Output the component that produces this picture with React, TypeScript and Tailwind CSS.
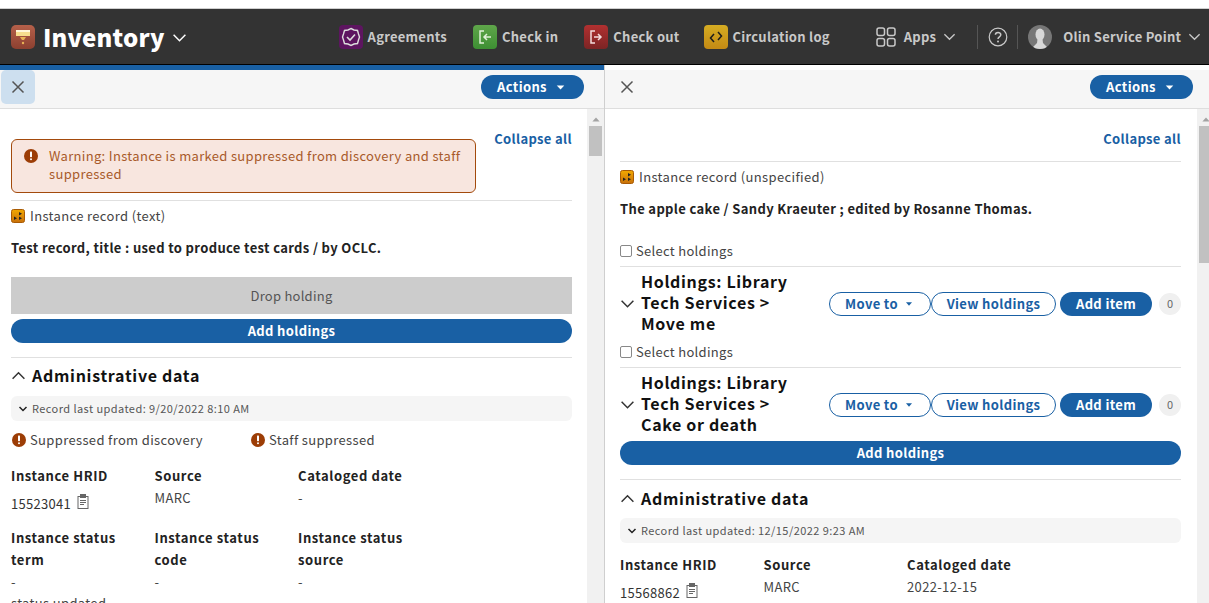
import { ReactNode } from 'react'

const FONT = 'font-["Noto_Sans_CJK_SC","Noto_Sans",sans-serif]'

const Chevron = ({ up, className }: { up?: boolean; className?: string }) => (
    <svg viewBox="0 0 14 14" className={className} fill="none" stroke="currentColor" strokeWidth="1.4">
        <path d={up ? 'M1.5 10 L7 4.5 L12.5 10' : 'M1.5 4.5 L7 10 L12.5 4.5'} />
    </svg>
)

const Caret = ({ className }: { className?: string }) => (
    <svg viewBox="0 0 10 6" className={className} fill="currentColor">
        <path d="M0.5 0.5 H9.5 L5 5.5 Z" />
    </svg>
)

const CloseX = () => (
    <svg viewBox="0 0 14 14" className="w-[14px] h-[14px] text-[#555]" fill="none" stroke="currentColor" strokeWidth="1.5">
        <path d="M1.5 1.5 L12.5 12.5 M12.5 1.5 L1.5 12.5" />
    </svg>
)

const AppTile = ({ bg, children }: { bg: string; children: ReactNode }) => (
    <div className={`w-6 h-6 rounded-[4px] flex items-center justify-center shrink-0 ${bg}`}>
        <svg viewBox="0 0 24 24" className="w-6 h-6" fill="none">
            {children}
        </svg>
    </div>
)

const NavItem = ({ label, tile, className }: { label: string; tile: ReactNode; className: string }) => (
    <div className={`flex items-center gap-[5px] shrink-0 ${className}`}>
        {tile}
        <span className="text-[13px] font-bold text-[#c9c9c9] tracking-[0.25px] whitespace-nowrap">{label}</span>
    </div>
)

const ActionsButton = () => (
    <button
        type="button"
        className="w-[103px] h-6 rounded-full bg-[#1960a4] text-white text-[13px] font-bold tracking-[0.35px] flex items-center justify-center gap-[9px] pr-[3px]"
    >
        Actions
        <Caret className="w-[9px] h-[5px]" />
    </button>
)

const RecordIcon = () => (
    <svg viewBox="0 0 14 14" className="w-[14px] h-[14px] shrink-0">
        <defs>
            <linearGradient id="rec" x1="0" y1="0" x2="0" y2="1">
                <stop offset="0" stopColor="#f2a900" />
                <stop offset="1" stopColor="#c8700a" />
            </linearGradient>
        </defs>
        <rect x="0.5" y="0.5" width="13" height="13" rx="2" fill="url(#rec)" stroke="#a85a05" />
        <path d="M8 3 L11 4.7 L8 6.4 Z M3 7.6 L6 9.3 L3 11 Z M8 7.6 L11 9.3 L8 11 Z" fill="#222" />
    </svg>
)

const WarnIcon = () => (
    <svg viewBox="0 0 14 14" className="w-[14px] h-[14px] shrink-0">
        <circle cx="7" cy="7" r="7" fill="#9c3d06" />
        <rect x="6" y="2.6" width="2" height="5.6" rx="0.6" fill="#fff" />
        <rect x="6" y="9.3" width="2" height="2" rx="1" fill="#fff" />
    </svg>
)

const ClipIcon = () => (
    <svg viewBox="0 0 12 15" className="w-3 h-[15px] text-[#666] shrink-0" fill="none" stroke="currentColor" strokeWidth="1">
        <rect x="1" y="2.5" width="10" height="12" />
        <rect x="3.5" y="0.5" width="5" height="3" fill="currentColor" />
        <path d="M3 6.5 H9 M3 8.5 H9 M3 10.5 H7" />
    </svg>
)

const Scrollbar = ({ thumb }: { thumb: string }) => (
    <div className="w-[17px] shrink-0 bg-[#f1f1f1] flex flex-col items-center">
        <svg viewBox="0 0 10 6" className="w-2 h-[5px] mt-[8px] text-[#a3a3a3]" fill="currentColor">
            <path d="M5 0.5 L9.5 5.5 H0.5 Z" />
        </svg>
        <div className={`w-[13px] bg-[#c1c1c1] mt-[4px] ${thumb}`} />
    </div>
)

const Field = ({ label, value, hrid }: { label: ReactNode; value: string; hrid?: boolean }) => (
    <div className="w-[143.5px] shrink-0 pr-[20px]">
        <div className="text-[13px] font-bold text-[#222] tracking-[0.6px] leading-[22px]">{label}</div>
        {hrid ? (
            <div className="flex items-center gap-[6px] mt-[6px] text-[13px] text-[#333] tracking-[0.3px] leading-[22px]">
                {value}
                <span className="-mt-[5px]">
                    <ClipIcon />
                </span>
            </div>
        ) : (
            <div className="text-[13px] text-[#444] tracking-[0.35px] leading-[22px]">{value}</div>
        )}
    </div>
)

const AdminHeading = () => (
    <div className="flex items-center gap-[6px] h-[22px]">
        <Chevron up className="w-[15px] h-[15px] text-[#333]" />
        <span className="text-[16px] font-bold text-[#111] tracking-[0.7px]">Administrative data</span>
    </div>
)

const LastUpdated = ({ text }: { text: string }) => (
    <div className="h-[25px] bg-[#f5f5f5] rounded-[6px] flex items-center pl-[7px] gap-[4px]">
        <svg viewBox="0 0 10 10" className="w-[10px] h-[10px] text-[#222]" fill="none" stroke="currentColor" strokeWidth="1.5">
            <path d="M1.5 3 L5 6.5 L8.5 3" />
        </svg>
        <span className="text-[11px] text-[#555] tracking-[0.43px]">{text}</span>
    </div>
)

const Holding = ({ name }: { name: string }) => (
    <div>
        <div className="flex items-center gap-[4px] h-[18px] text-[13px] text-[#444] tracking-[0.3px]">
            <span className="w-3 h-3 border border-[#888] rounded-[2px] bg-white shrink-0" />
            Select holdings
        </div>
        <div className="border-t border-[#e0e0e0] mt-[6px] flex items-center h-[72px] pt-[2px]">
            <Chevron className="w-[15px] h-[15px] text-[#333] shrink-0 mr-[6px]" />
            <div className="w-[188px] pr-[24px] -mt-[2px] shrink-0 text-[16px] font-bold text-[#111] tracking-[0.65px] leading-[21px]">
                Holdings: Library Tech Services &gt; {name}
            </div>
            <div className="w-[102px] h-6 rounded-full border border-[#1960a4] text-[#1960a4] text-[13px] font-bold tracking-[0.35px] flex items-center justify-center gap-[6px] pr-[1px]">
                Move to
                <Caret className="w-[10px] h-[4px]" />
            </div>
            <div className="w-[125px] h-6 rounded-full border border-[#1960a4] text-[#1960a4] text-[13px] font-bold tracking-[0.35px] flex items-center justify-center">
                View holdings
            </div>
            <div className="w-[92px] h-6 ml-[4px] rounded-full bg-[#1960a4] text-white text-[13px] font-bold tracking-[0.35px] flex items-center justify-center">
                Add item
            </div>
            <div className="w-[22px] h-[22px] ml-[7px] rounded-full bg-[#f0f0f0] text-[#666] text-[11px] flex items-center justify-center">
                0
            </div>
        </div>
    </div>
)

const CollapseAll = () => (
    <div className="text-[13px] font-bold text-[#1960a4] tracking-[0.35px] text-right leading-[20px]">Collapse all</div>
)

const AddHoldings = () => (
    <div className="h-6 rounded-full bg-[#1960a4] text-white text-[13px] font-bold tracking-[0.35px] flex items-center justify-center">
        Add holdings
    </div>
)

const RecordType = ({ text }: { text: string }) => (
    <div className="flex items-center gap-[5px] mt-[6px] h-[18px] text-[13px] text-[#444] tracking-[0.36px]">
        <RecordIcon />
        {text}
    </div>
)

const RecordTitle = ({ text }: { text: string }) => (
    <div className="mt-[14px] h-[18px] leading-[18px] text-[13px] font-bold text-[#222] tracking-[0.35px]">{text}</div>
)

const LeftPane = () => (
    <div className="w-[604px] shrink-0 border-t-[5px] border-[#1960a4] h-full flex flex-col">
        <div className="h-[39px] bg-[#f6f6f6] border-b border-[#dedede] flex items-start justify-between pr-[20px] pl-[1px] shrink-0">
            <div className="w-[34px] h-[34px] rounded-[5px] bg-[#cddfef] flex items-center justify-center">
                <CloseX />
            </div>
            <div className="mt-[5px]">
                <ActionsButton />
            </div>
        </div>
        <div className="flex flex-1 min-h-0 overflow-hidden">
            <div className="w-[561px] ml-[11px] mr-[15px] shrink-0">
                <div className="mt-[20px]">
                    <CollapseAll />
                </div>
                <div className="w-[465px] h-[54px] mt-[-10px] rounded-[6px] border border-[#a34a0c] bg-[#f8e6df] flex gap-[11px] pl-[12px] pt-[7px]">
                    <div className="mt-[2px]">
                        <WarnIcon />
                    </div>
                    <div className="text-[13px] text-[#a85a2a] tracking-[0.33px] leading-[18px] w-[420px]">
                        Warning: Instance is marked suppressed from discovery and staff suppressed
                    </div>
                </div>
                <div className="border-t border-[#e0e0e0] mt-[7px]" />
                <RecordType text="Instance record (text)" />
                <RecordTitle text="Test record, title : used to produce test cards / by OCLC." />
                <div className="mt-[20px] h-[37px] bg-[#cccccc] flex items-center justify-center text-[13px] text-[#555] tracking-[0.25px]">
                    Drop holding
                </div>
                <div className="mt-[5px]">
                    <AddHoldings />
                </div>
                <div className="border-t border-[#e0e0e0] mt-[14px] pt-[6px]">
                    <AdminHeading />
                </div>
                <div className="mt-[10px]">
                    <LastUpdated text="Record last updated: 9/20/2022 8:10 AM" />
                </div>
                <div className="flex mt-[10px] h-[18px] items-center text-[13px] text-[#444] tracking-[0.35px]">
                    <div className="flex items-center gap-[4px] w-[240px] pl-[1px]">
                        <WarnIcon />
                        Suppressed from discovery
                    </div>
                    <div className="flex items-center gap-[4px]">
                        <WarnIcon />
                        Staff suppressed
                    </div>
                </div>
                <div className="flex mt-[16px]">
                    <Field label="Instance HRID" value="15523041" hrid />
                    <Field label="Source" value="MARC" />
                    <Field label="Cataloged date" value="-" />
                </div>
                <div className="flex mt-[12px]">
                    <Field label="Instance status term" value="-" />
                    <Field label="Instance status code" value="-" />
                    <Field label="Instance status source" value="-" />
                </div>
                <div className="text-[13px] text-[#444] tracking-[0.35px] leading-[20px]">status updated</div>
            </div>
            <Scrollbar thumb="h-[30px]" />
        </div>
    </div>
)

const RightPane = () => (
    <div className="shrink-0 border-l border-[#cfcfcf] h-full pt-[5px] flex flex-col">
        <div className="h-[39px] bg-[#f6f6f6] border-b border-[#dedede] flex items-start pl-[5px] shrink-0">
            <div className="w-[34px] h-[34px] flex items-center justify-center">
                <CloseX />
            </div>
            <div className="ml-[446px] mt-[5px] mr-[16px]">
                <ActionsButton />
            </div>
        </div>
        <div className="flex flex-1 min-h-0 overflow-hidden">
            <div className="w-[561px] ml-[15px] mr-[16px] shrink-0">
                <div className="mt-[20px]">
                    <CollapseAll />
                </div>
                <div className="border-t border-[#e0e0e0] mt-[12px]" />
                <RecordType text="Instance record (unspecified)" />
                <RecordTitle text="The apple cake / Sandy Kraeuter ; edited by Rosanne Thomas." />
                <div className="mt-[24px]">
                    <Holding name="Move me" />
                </div>
                <div className="mt-[5px]">
                    <Holding name="Cake or death" />
                </div>
                <div className="mt-[2px]">
                    <AddHoldings />
                </div>
                <div className="border-t border-[#e0e0e0] mt-[14px] pt-[7px]">
                    <AdminHeading />
                </div>
                <div className="mt-[9px]">
                    <LastUpdated text="Record last updated: 12/15/2022 9:23 AM" />
                </div>
                <div className="flex mt-[11px]">
                    <Field label="Instance HRID" value="15568862" hrid />
                    <Field label="Source" value="MARC" />
                    <Field label="Cataloged date" value="2022-12-15" />
                </div>
            </div>
            <Scrollbar thumb="h-[137px]" />
        </div>
    </div>
)

const Header = () => (
    <div className="h-[56px] bg-[#333333] border-b border-black flex items-center text-white shrink-0">
        <div className="w-6 h-6 ml-[11px] rounded-[5px] bg-gradient-to-b from-[#b5604a] to-[#8c4030] flex items-center justify-center shrink-0">
            <svg viewBox="0 0 24 24" className="w-6 h-6">
                <rect x="5" y="5" width="14" height="6" fill="#f6dd8e" />
                <rect x="5" y="5" width="14" height="2" fill="#fff6d8" />
                <path d="M9 12 H15 L13 15 H11 Z" fill="#e8b355" />
                <circle cx="12" cy="18" r="1.2" fill="#e8b355" />
            </svg>
        </div>
        <span className="ml-[8px] text-[24px] font-black tracking-[0.2px]">Inventory</span>
        <Chevron className="w-[15px] h-[15px] ml-[7px] mt-[2px] text-white shrink-0" />
        <NavItem
            className="ml-[152px]"
            label="Agreements"
            tile={
                <AppTile bg="bg-[#5d1560]">
                    <path d="M12 3.5 L15 5 L18.5 5.5 L19.5 9 L20.5 12 L19.5 15 L18.5 18.5 L15 19 L12 20.5 L9 19 L5.5 18.5 L4.5 15 L3.5 12 L4.5 9 L5.5 5.5 L9 5 Z" stroke="#ddd" strokeWidth="1.4" />
                    <path d="M8 12 L11 15 L16 9.5" stroke="#ddd" strokeWidth="1.6" />
                </AppTile>
            }
        />
        <NavItem
            className="ml-[26px]"
            label="Check in"
            tile={
                <AppTile bg="bg-gradient-to-b from-[#5fa64a] to-[#3d8f33]">
                    <path d="M11 6 H7 V18 H11" stroke="#dff0d8" strokeWidth="1.5" />
                    <path d="M18 12 H11 M14 9 L11 12 L14 15" stroke="#dff0d8" strokeWidth="1.5" />
                </AppTile>
            }
        />
        <NavItem
            className="ml-[26px]"
            label="Check out"
            tile={
                <AppTile bg="bg-gradient-to-b from-[#b23030] to-[#7c2424]">
                    <path d="M11 6 H7 V18 H11" stroke="#f3dcdc" strokeWidth="1.5" />
                    <path d="M10 12 H17 M14 9 L17 12 L14 15" stroke="#f3dcdc" strokeWidth="1.5" />
                </AppTile>
            }
        />
        <NavItem
            className="ml-[24px]"
            label="Circulation log"
            tile={
                <AppTile bg="bg-gradient-to-b from-[#d5ac22] to-[#c48a14]">
                    <path d="M10 9 L6.5 13 L10 17 M14 7 L17.5 11 L14 15" stroke="#1c1c1c" strokeWidth="1.5" />
                </AppTile>
            }
        />
        <div className="ml-[46px] flex items-center shrink-0">
            <svg viewBox="0 0 20 20" className="w-5 h-5 text-[#c9c9c9]" fill="none" stroke="currentColor" strokeWidth="1.5">
                <rect x="1" y="1" width="7.5" height="7.5" rx="2" />
                <rect x="11.5" y="1" width="7.5" height="7.5" rx="2" />
                <rect x="1" y="11.5" width="7.5" height="7.5" rx="2" />
                <rect x="11.5" y="11.5" width="7.5" height="7.5" rx="2" />
            </svg>
            <span className="ml-[8px] text-[13px] font-bold text-[#c9c9c9] tracking-[0.25px]">Apps</span>
            <Chevron className="w-[13px] h-[13px] ml-[7px] text-[#c9c9c9]" />
        </div>
        <div className="ml-[21px] w-px h-6 bg-[#555] shrink-0" />
        <svg viewBox="0 0 20 20" className="w-[20px] h-[20px] ml-[10px] text-[#c9c9c9] shrink-0" fill="none" stroke="currentColor" strokeWidth="1.2">
            <circle cx="10" cy="10" r="8.8" />
            <path d="M7.4 7.8 C7.4 4.6 12.8 4.6 12.8 7.8 C12.8 9.8 10 9.8 10 12" strokeWidth="1.5" />
            <circle cx="10" cy="14.6" r="1" fill="currentColor" stroke="none" />
        </svg>
        <div className="ml-[9px] w-px h-6 bg-[#555] shrink-0" />
        <svg viewBox="0 0 24 24" className="w-6 h-6 ml-[10px] shrink-0">
            <defs>
                <clipPath id="av">
                    <circle cx="12" cy="12" r="12" />
                </clipPath>
            </defs>
            <circle cx="12" cy="12" r="12" fill="#777" />
            <g clipPath="url(#av)" fill="#d8d8d8">
                <ellipse cx="12" cy="9.5" rx="4.5" ry="6" />
                <path d="M9.5 14 H14.5 L15 18 L21 24 H3 L9 18 Z" />
            </g>
        </svg>
        <span className="ml-[11px] text-[13px] font-bold text-[#c9c9c9] tracking-[0.25px] whitespace-nowrap">Olin Service Point</span>
        <Chevron className="w-[13px] h-[13px] ml-[7px] text-[#c9c9c9] shrink-0" />
    </div>
)

export default function App() {
    return (
        <div className={`h-[603px] w-[1209px] overflow-hidden bg-white flex flex-col ${FONT}`}>
            <div className="h-[9px] bg-white border-b border-[#cfcfcf] shrink-0" />
            <Header />
            <div className="flex flex-1 min-h-0">
                <LeftPane />
                <RightPane />
            </div>
        </div>
    )
}
